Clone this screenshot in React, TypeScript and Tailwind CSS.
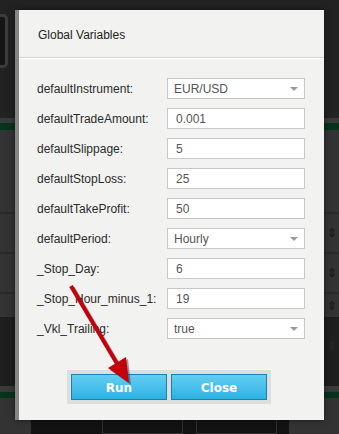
// Global Variables dialog over a dark trading workspace

const rows: { label: string; value: string; select?: boolean }[] = [
  { label: "defaultInstrument:", value: "EUR/USD", select: true },
  { label: "defaultTradeAmount:", value: "0.001" },
  { label: "defaultSlippage:", value: "5" },
  { label: "defaultStopLoss:", value: "25" },
  { label: "defaultTakeProfit:", value: "50" },
  { label: "defaultPeriod:", value: "Hourly", select: true },
  { label: "_Stop_Day:", value: "6" },
  { label: "_Stop_Hour_minus_1:", value: "19" },
  { label: "_Vkl_Trailing:", value: "true", select: true },
];

function Caret() {
  return (
    <svg width="8" height="4" viewBox="0 0 8 4" className="shrink-0">
      <polygon points="0,0 8,0 4,4" fill="#9a9a9a" />
    </svg>
  );
}

export default function App() {
  return (
    <div className="relative w-[339px] h-[434px] overflow-hidden bg-[#262626] font-['Liberation_Sans',Arial,sans-serif]">

      {/* Background workspace */}
      <div className="flex flex-col w-full h-full">
        <div className="h-[123px] bg-[#222222] relative">
          <div className="ml-[-6px] mt-[14px] w-[14px] h-[54px] rounded-[5px] border-[3px] border-[#3c3c3c] bg-[#151515]"></div>
        </div>
        <div className="h-[5px] bg-[#3a3a3a]"></div>
        <div className="h-[7px] bg-[#07331a]"></div>
        <div className="h-[195px] bg-[#333333] flex flex-col">
          <div className="h-[84px] border-b-2 border-[#2a2a2a]"></div>
          <div className="h-[40px] border-b-2 border-[#2a2a2a] flex justify-end items-center pr-[2px]">
            <span className="text-[#1f1f1f] text-[12px] font-bold">≡ ⇕</span>
          </div>
          <div className="h-[40px] border-b-2 border-[#2a2a2a] flex justify-end items-center pr-[2px]">
            <span className="text-[#1f1f1f] text-[12px] font-bold">≡ ⇕</span>
          </div>
          <div className="flex-1 flex justify-end items-center pr-[2px]">
            <span className="text-[#1f1f1f] text-[12px] font-bold">≡ ⇕</span>
          </div>
        </div>
        <div className="h-[70px] bg-[#1e1e1e] flex justify-end items-start pr-[2px] pt-[20px]">
          <span className="text-[#262626] text-[12px] font-bold">≡ ⇕</span>
        </div>
        <div className="h-[7px] bg-[#3a3a3a]"></div>
        <div className="h-[6px] bg-[#07331a]"></div>
        <div className="flex-1 flex">
          <div className="w-[31px] bg-[#333333]"></div>
          <div className="w-[258px] bg-[#121212] flex gap-[13px] pl-[71px] pt-[16px]">
            <div className="w-[81px] h-[20px] border border-[#303030]"></div>
            <div className="w-[81px] h-[20px] border border-[#303030]"></div>
          </div>
          <div className="flex-1 bg-[#333333]"></div>
        </div>
      </div>

      {/* Dialog */}
      <div className="absolute left-[15px] top-[10px] w-[309px] h-[410px] flex border-l-4 border-[#858585] bg-[#f2f2f0] shadow-[0_0_6px_rgba(0,0,0,0.5)]">
        <div className="flex-1 flex flex-col">
          <div className="h-[48px] flex items-center pl-[19px] pt-[3px] border-b border-[#d6d6d6] text-[12px] text-[#222222]">
            Global Variables
          </div>
          <div className="h-px bg-white"></div>

          <div className="flex flex-col gap-[9px] pt-[19px] pl-[18px]">
            {rows.map((r) => (
              <div key={r.label} className="flex items-center h-[21px]">
                <div className="w-[130px] text-[12px] text-[#2b2b2b]">{r.label}</div>
                <div
                  className={
                    r.select
                      ? "w-[138px] h-[21px] bg-white border border-[#c8c8c8] flex items-center justify-between pl-[6px] pr-[6px] text-[12px] text-[#555555]"
                      : "w-[138px] h-[21px] bg-white border border-[#c8c8c8] flex items-center pl-[8px] text-[12px] text-[#555555]"
                  }
                >
                  <span>{r.value}</span>
                  {r.select && <Caret />}
                </div>
              </div>
            ))}
          </div>

          <div className="mt-[31px] ml-[48px] w-[204px] h-[34px] bg-[#dedede] flex gap-[4px] p-[4px]">
            <button className="flex-1 pt-[2px] border border-[#1a82a8] bg-gradient-to-b from-[#62cef2] to-[#28b2e4] text-white font-bold text-[12px] font-['DejaVu_Sans',Verdana,sans-serif]">
              Run
            </button>
            <button className="flex-1 pt-[2px] border border-[#1a82a8] bg-gradient-to-b from-[#62cef2] to-[#28b2e4] text-white font-bold text-[12px] font-['DejaVu_Sans',Verdana,sans-serif]">
              Close
            </button>
          </div>
        </div>
      </div>

      {/* Red arrow annotation */}
      <svg className="absolute left-0 top-0 pointer-events-none" width="339" height="434" viewBox="0 0 339 434">
        <g opacity="0.35" transform="translate(2,2)">
          <line x1="71" y1="286" x2="119" y2="367" stroke="#000" strokeWidth="4" />
          <polygon points="129,383 108,368 126,357" fill="#000" />
        </g>
        <line x1="71" y1="286" x2="119" y2="367" stroke="#c4000c" strokeWidth="4" />
        <polygon points="129,383 108,368 126,357" fill="#c4000c" />
      </svg>
    </div>
  );
}
